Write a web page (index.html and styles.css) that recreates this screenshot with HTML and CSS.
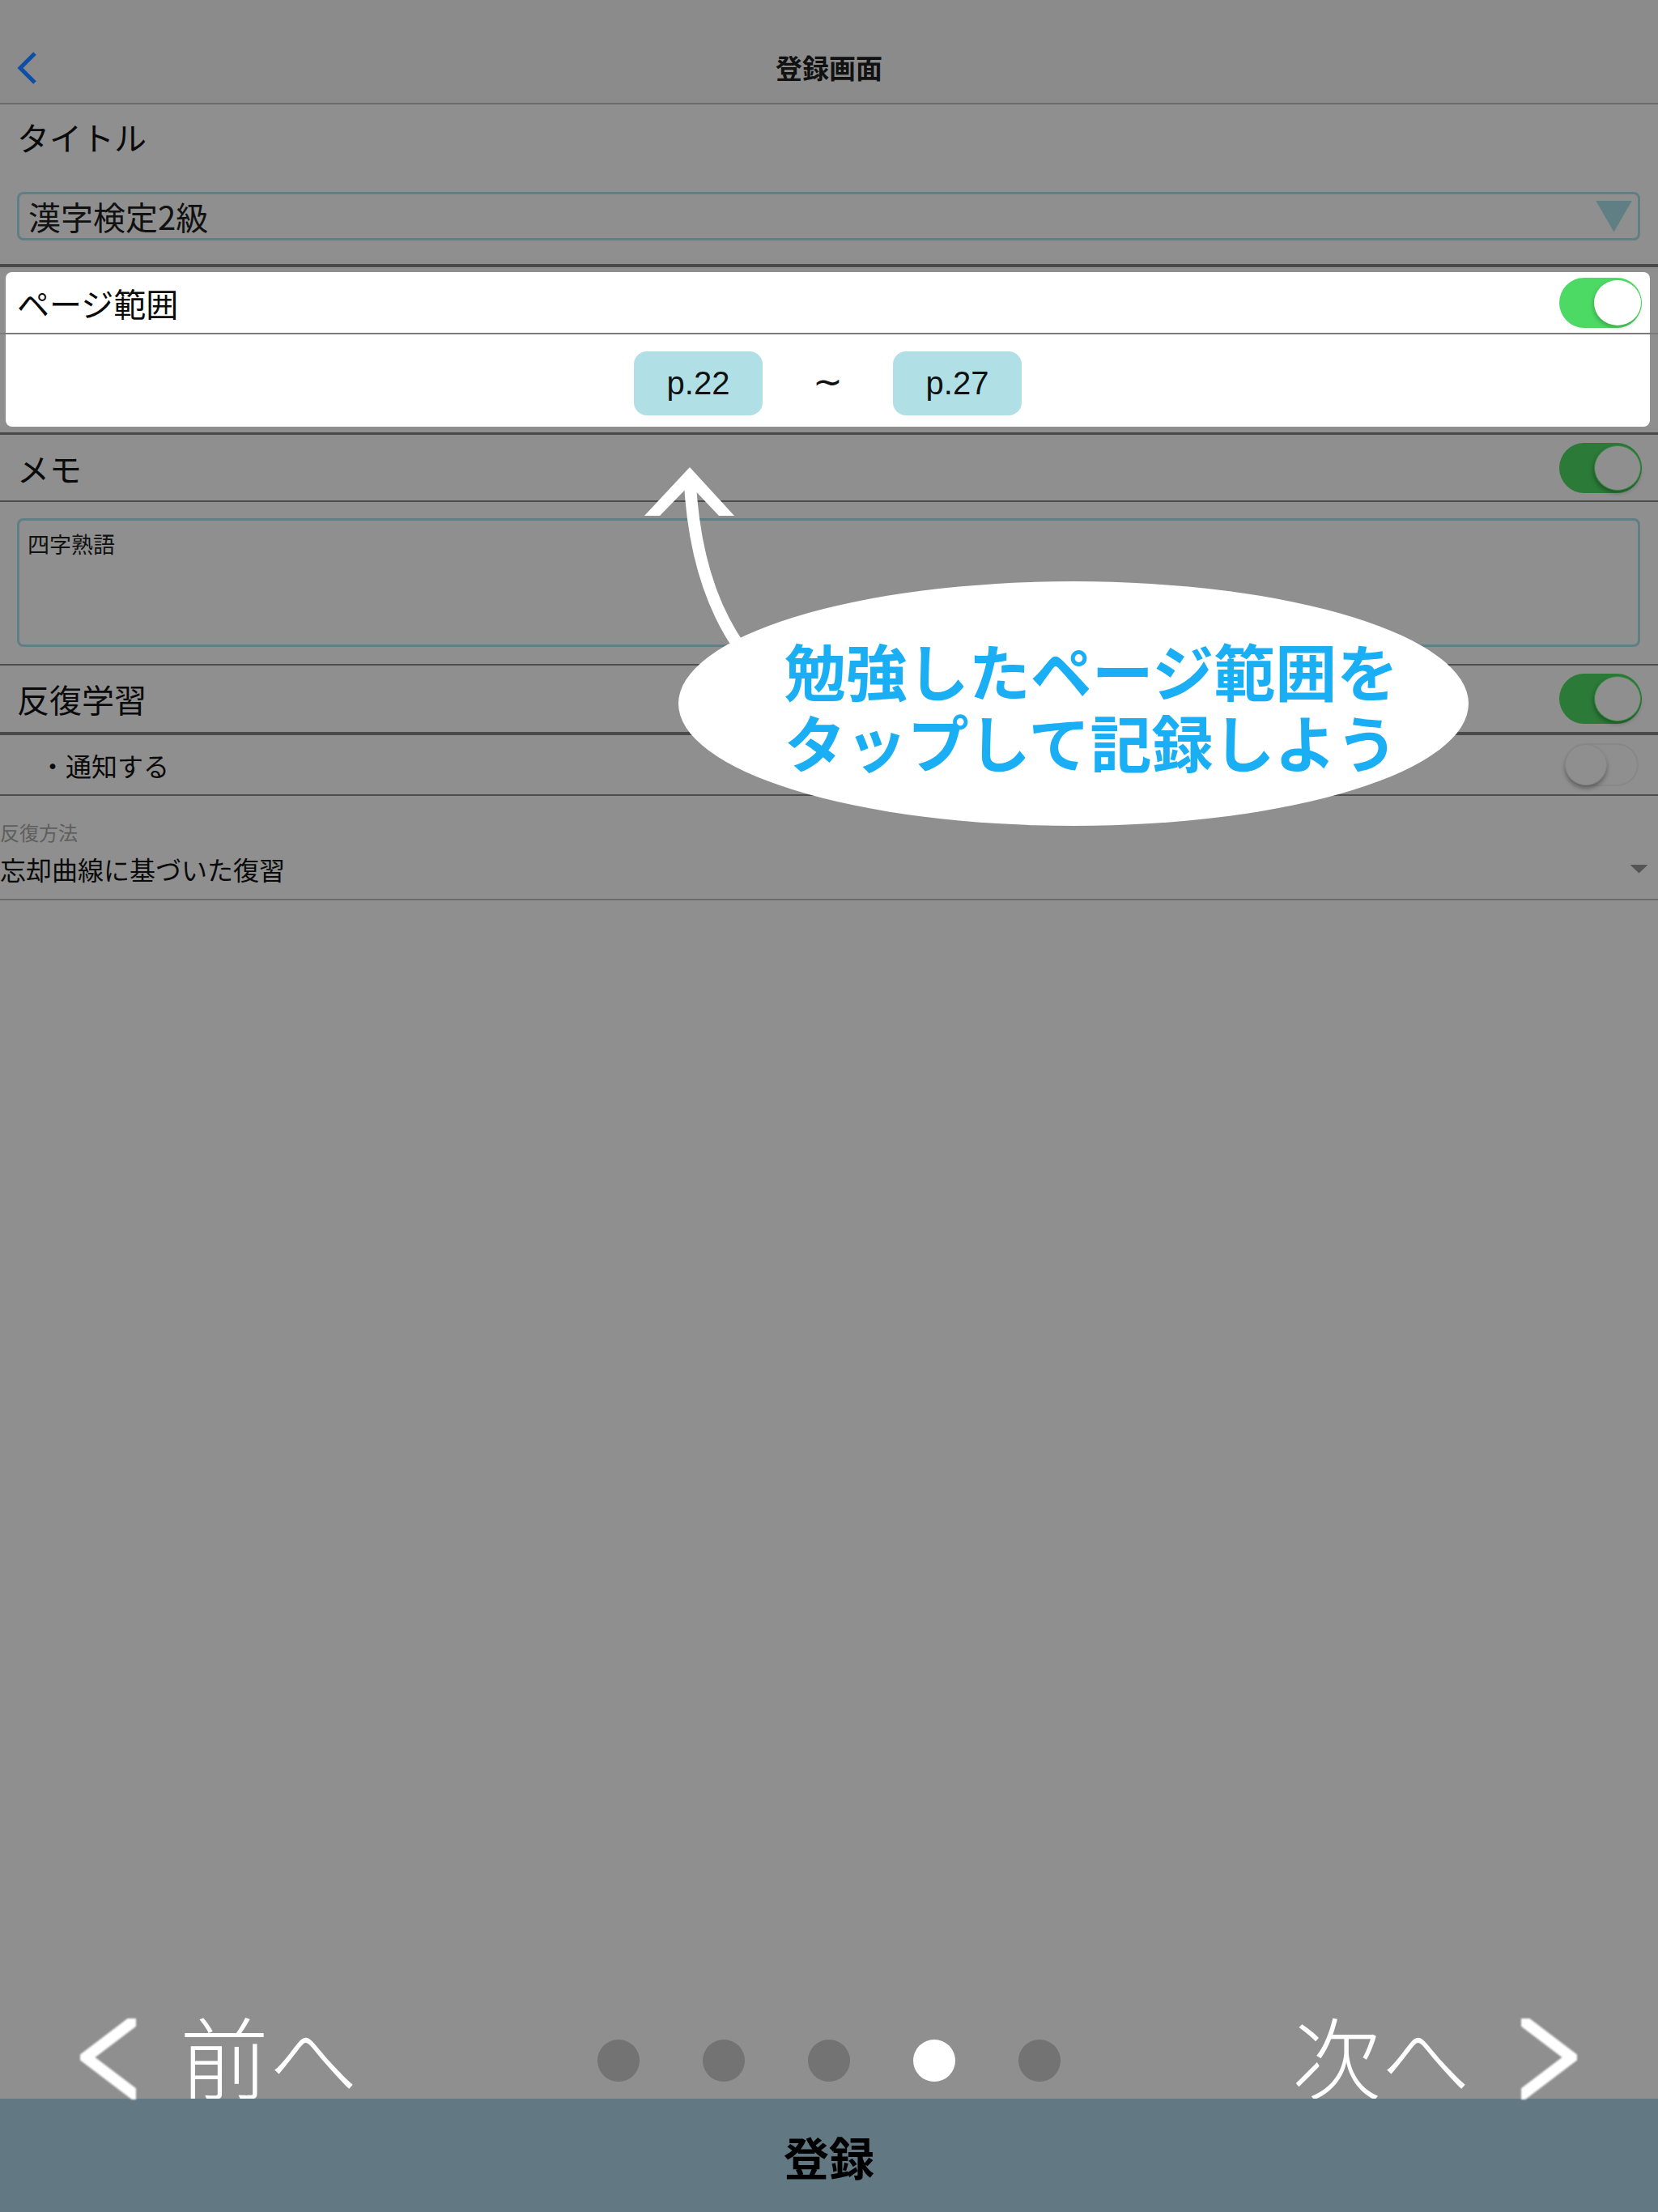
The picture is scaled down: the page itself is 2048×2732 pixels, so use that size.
FILE: index.html
```html
<!DOCTYPE html>
<html lang="ja">
<head>
<meta charset="utf-8">
<title>登録画面</title>
<link rel="stylesheet" href="styles.css">
</head>
<body>
<div class="screen">
  <header class="navbar">
    <svg class="back" width="26" height="40" viewBox="0 0 26 40"><polyline points="23,2 5,20 23,38" fill="none" stroke="#0d4ea6" stroke-width="5"/></svg>
    <div class="nav-title">登録画面</div>
  </header>

  <section class="title-section">
    <div class="label">タイトル</div>
    <div class="select">
      <span class="select-text">漢字検定2級</span>
      <span class="select-arrow"></span>
    </div>
  </section>

  <div class="card">
    <div class="row card-head">
      <span class="row-label">ページ範囲</span>
      <span class="switch on"><span class="knob"></span></span>
    </div>
    <div class="card-line"></div>
    <div class="range">
      <span class="page-btn">p.22</span>
      <span class="tilde">~</span>
      <span class="page-btn">p.27</span>
    </div>
  </div>

  <div class="row memo-row">
    <span class="row-label">メモ</span>
    <span class="switch dim"><span class="knob"></span></span>
  </div>
  <div class="memo-section">
    <div class="memo-box">四字熟語</div>
  </div>

  <div class="row repeat-row">
    <span class="row-label">反復学習</span>
    <span class="switch dim"><span class="knob"></span></span>
  </div>
  <div class="row notify-row">
    <span class="notify-label">・通知する</span>
    <span class="switch off"><span class="knob"></span></span>
  </div>

  <div class="method">
    <div class="method-label">反復方法</div>
    <div class="method-value">
      <span>忘却曲線に基づいた復習</span>
      <span class="small-arrow"></span>
    </div>
  </div>

  <div class="spacer"></div>

  <nav class="pager">
    <div class="pager-left">
      <svg class="chev" width="69" height="100" viewBox="0 0 69 100"><polyline points="82,-9 7,48 82,105" fill="none" stroke="#fff" stroke-width="14"/></svg>
      <span class="pager-text prev-text">前へ</span>
    </div>
    <div class="dots">
      <span class="dot"></span><span class="dot"></span><span class="dot"></span><span class="dot active"></span><span class="dot"></span>
    </div>
    <div class="pager-right">
      <span class="pager-text next-text">次へ</span>
      <svg class="chev" width="69" height="100" viewBox="0 0 69 100"><polyline points="-13,-9 62,48 -13,105" fill="none" stroke="#fff" stroke-width="14"/></svg>
    </div>
  </nav>

  <footer class="submit-bar">登録</footer>

  <svg class="guide-arrow" width="180" height="260" viewBox="0 0 180 260">
    <path d="M72 30 Q78 160 134 240" fill="none" stroke="#fff" stroke-width="15"/>
    <polygon points="16,77 72,17 127,77 108,77 72,39 35,77" fill="#fff"/>
  </svg>
  <div class="bubble">
    <div class="bubble-text">
      <div class="bubble-line">勉強したページ範囲を</div>
      <div class="bubble-line">タップして記録しよう</div>
    </div>
  </div>
</div>
</body>
</html>
```

FILE: styles.css
```css
* { box-sizing: border-box; }
html, body { margin: 0; padding: 0; }
body {
  width: 2048px;
  height: 2732px;
  overflow: hidden;
  background: #8f8f8f;
  font-family: "Noto Sans CJK JP", "Noto Sans", sans-serif;
  color: #0a0a0a;
}
.screen {
  position: relative;
  width: 2048px;
  height: 2732px;
  display: flex;
  flex-direction: column;
}

/* nav bar */
.navbar {
  height: 129px;
  padding-top: 40px;
  background: #8b8b8b;
  border-bottom: 2px solid #6b6b6b;
  display: flex;
  align-items: center;
  position: relative;
}
.back { margin-left: 20px; margin-top: 0; }
.nav-title {
  position: absolute;
  left: 0; right: 0;
  top: 40px;
  height: 87px;
  line-height: 87px;
  text-align: center;
  font-size: 33px;
  font-weight: 700;
  color: #111;
}

/* title */
.title-section {
  padding: 0 22px 29px 21px;
  border-bottom: 4px solid #4a4a4a;
  margin-bottom: 6px;
}
.label {
  height: 80px;
  line-height: 80px;
  font-size: 40px;
}
.select {
  margin-top: 28px;
  height: 60px;
  border: 3px solid #5f7f84;
  border-radius: 8px;
  display: flex;
  align-items: center;
  justify-content: space-between;
  padding: 0 7px 0 11px;
}
.select-text { font-size: 40px; line-height: 54px; color: #111; }
.select-arrow {
  width: 45px;
  height: 39px;
  background: #5f7f84;
  clip-path: polygon(0 0, 100% 0, 50% 100%);
}

/* generic rows */
.row {
  display: flex;
  align-items: center;
  justify-content: space-between;
  padding: 0 20px 0 21px;
}
.row-label { font-size: 40px; }

/* highlighted card */
.card {
  background: #fff;
  border-radius: 8px;
  margin: 0 10px 0 7px;
  height: 191px;
  display: flex;
  flex-direction: column;
}
.card-head { height: 75px; padding: 0 10px 0 14px; }
.card-line {
  height: 2px;
  background: #7b7b7b;
  margin: 0 -10px 0 -7px;
}
.range {
  flex: 1;
  display: flex;
  justify-content: center;
  align-items: flex-start;
  padding-top: 21px;
}
.page-btn {
  width: 159px;
  height: 79px;
  border-radius: 16px;
  background: #b0e0e6;
  display: flex;
  align-items: center;
  justify-content: center;
  font-family: "Liberation Sans", Arial, sans-serif;
  font-size: 40px;
  color: #111;
}
.tilde {
  width: 161px;
  height: 79px;
  line-height: 76px;
  text-align: center;
  font-family: "DejaVu Sans", sans-serif;
  font-size: 44px;
  color: #111;
}

/* switches */
.switch {
  width: 102px;
  height: 62px;
  border-radius: 31px;
  display: flex;
  align-items: center;
  padding: 0 1px;
}
.switch .knob {
  width: 58px;
  height: 56px;
  border-radius: 50%;
}
.switch.on { background: #4cd964; justify-content: flex-end; }
.switch.on .knob { background: #fff; box-shadow: -1px 3px 5px rgba(0,0,0,0.22); }
.switch.dim { background: #2b7a38; justify-content: flex-end; }
.switch.dim .knob { background: #8f8f8f; box-shadow: -1px 3px 5px rgba(0,0,0,0.3); border: 1px solid #2f8a3c; }
.switch.off {
  width: 91px;
  height: 53px;
  border-radius: 27px;
  border: 2px solid #878787;
  background: #8f8f8f;
  justify-content: flex-start;
  padding: 0;
  margin-right: 4px;
}
.switch.off .knob {
  width: 52px;
  height: 51px;
  background: #8f8f8f;
  border: 1px solid #868686;
  box-shadow: 0 4px 5px rgba(0,0,0,0.3);
  margin-left: -2px;
}

.memo-row {
  margin-top: 7px;
  border-top: 3px solid #4a4a4a;
  height: 86px;
  border-bottom: 2px solid #4e4e4e;
}
.memo-section {
  padding: 20px 22px 21px 21px;
  border-bottom: 2px solid #4e4e4e;
}
.memo-box {
  height: 159px;
  border: 3px solid #5f7f84;
  border-radius: 8px;
  padding: 12px 10px;
  font-size: 27px;
  line-height: 34px;
  color: #111;
}
.repeat-row {
  height: 86px;
  border-bottom: 4px solid #4a4a4a;
}
.notify-row {
  height: 75px;
  border-bottom: 2px solid #4e4e4e;
  padding-left: 49px;
}
.notify-label { font-size: 32px; }

.method {
  padding: 30px 12px 17px 0;
  border-bottom: 2px solid #6b6b6b;
}
.method-label {
  font-size: 24px;
  line-height: 30px;
  color: #5e5e5e;
}
.method-value {
  margin-top: 10px;
  display: flex;
  align-items: center;
  justify-content: space-between;
  font-size: 32px;
  line-height: 40px;
}
.small-arrow {
  width: 23px;
  height: 11px;
  background: #555;
  clip-path: polygon(0 0, 100% 0, 50% 100%);
}

.spacer { flex: 1; }

/* pager */
.pager {
  height: 110px;
  display: grid;
  grid-template-columns: 1fr auto 1fr;
  align-items: center;
  padding: 0 100px 0 99px;
}
.pager-left, .pager-right {
  display: flex;
  align-items: flex-end;
  height: 110px;
}
.pager-right { justify-content: flex-end; }
.chev { filter: blur(1px); margin-bottom: -1px; }
.pager-text {
  font-size: 110px;
  line-height: 110px;
  font-weight: 300;
  color: #fff;
  height: 110px;
}
.prev-text { margin-left: 54px; }
.next-text { margin-right: 63px; }
.dots {
  display: flex;
  gap: 78px;
  margin-top: 16px;
}
.dot {
  width: 52px;
  height: 52px;
  border-radius: 50%;
  background: #737373;
}
.dot.active { background: #fff; }

.submit-bar {
  height: 140px;
  background: #627983;
  display: flex;
  align-items: center;
  justify-content: center;
  font-size: 56px;
  font-weight: 700;
  color: #000;
}

/* coach-mark overlay */
.guide-arrow {
  position: absolute;
  left: 780px;
  top: 560px;
}
.bubble {
  position: absolute;
  left: 838px;
  top: 718px;
  width: 976px;
  height: 302px;
  border-radius: 50%;
  background: #fff;
  display: flex;
  align-items: center;
  justify-content: center;
  padding: 4px 0 0 44px;
}
.bubble-text {
  font-size: 76px;
  font-weight: 700;
  color: #1aaff5;
  white-space: nowrap;
}
.bubble-line {
  height: 88px;
  line-height: 88px;
}
```
